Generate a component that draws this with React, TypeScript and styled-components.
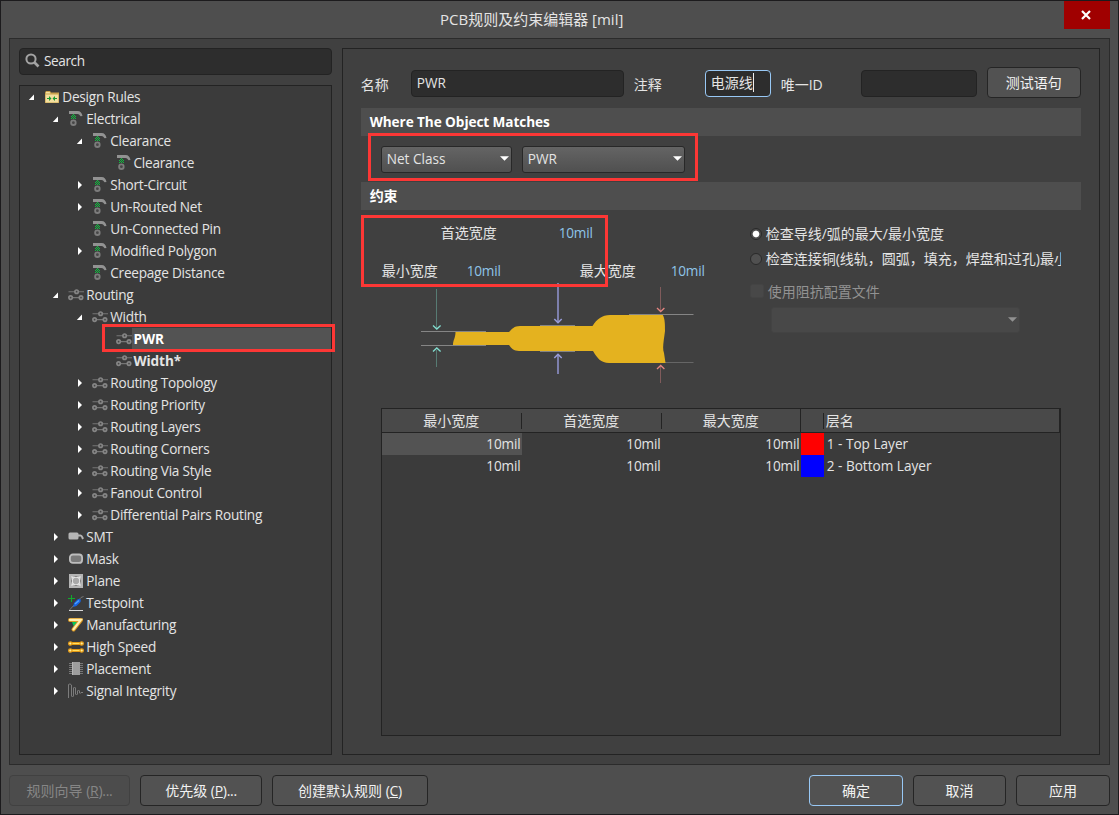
import React from 'react';
import styled, { createGlobalStyle, css } from 'styled-components';

const GlobalStyle = createGlobalStyle`
  * { box-sizing: border-box; }
  html, body { margin: 0; padding: 0; }
  body {
    background: #4d4d4d;
    color: #e4e4e4;
    font-family: "Open Sans", "Noto Sans CJK SC", sans-serif;
    font-size: 13.6px;
    overflow: hidden;
  }
`;

const Window = styled.div`
  position: relative;
  width: 1119px;
  height: 815px;
  padding: 0 8px;
  display: flex;
  flex-direction: column;
  background: #4e4e4e;
  border: 1px solid #1c1b1d;
`;

const TitleBar = styled.header`
  height: 37px;
  flex: none;
  display: flex;
  align-items: flex-start;
  justify-content: flex-end;
`;

const Title = styled.h1`
  flex: 1;
  margin: 0;
  padding-left: 431px;
  font-size: 15px;
  line-height: 37px;
  font-weight: 400;
  white-space: nowrap;
`;

const CloseButton = styled.button`
  width: 46px;
  height: 28px;
  padding: 0 2px 1px 0;
  border: 0;
  background: #a00000;
  display: flex;
  align-items: center;
  justify-content: center;
`;

const Body = styled.main`
  width: 1101px;
  height: 727px;
  flex: none;
  padding: 9px;
  display: flex;
  gap: 10px;
  background: #404040;
  border: 1px solid #2b2b2b;
`;

const Sidebar = styled.aside`
  width: 313px;
  display: flex;
  flex-direction: column;
  gap: 10px;
`;

const SearchBox = styled.div`
  height: 27px;
  padding: 0 0 2px 5px;
  display: flex;
  align-items: center;
  gap: 4px;
  letter-spacing: -0.4px;
  background: #2d2d2d;
  border: 1px solid #232323;
  border-radius: 4px;
`;

const Tree = styled.ul`
  flex: 1;
  margin: 0;
  padding: 0;
  list-style: none;
  background: #3b3b3b;
  border: 1px solid #232323;
`;

const TreeRow = styled.li<{ $level: number }>`
  position: relative;
  height: 22px;
  padding-left: ${p => p.$level * 24 + 8}px;
  display: flex;
  align-items: center;
`;

const Toggle = styled.span`
  width: 16px;
  height: 22px;
  display: flex;
  align-items: center;
`;

const IconSlot = styled.span`
  width: 16px;
  height: 16px;
  display: flex;
`;

const TreeLabel = styled.span<{ $bold?: boolean; $selected?: boolean; $leaf?: boolean }>`
  flex: 1;
  height: 22px;
  padding-left: ${p => (p.$leaf ? 1.5 : 2.3)}px;
  line-height: 22px;
  letter-spacing: ${p => (p.$bold ? -0.1 : -0.24)}px;
  white-space: nowrap;
  font-weight: ${p => (p.$bold ? 700 : 400)};
  ${p => p.$selected && css`color: #fff; background: #535353;`}
`;

const Highlight = styled.div<{ $x: number; $y: number; $w: number; $h: number }>`
  position: absolute;
  left: ${p => p.$x}px;
  top: ${p => p.$y}px;
  width: ${p => p.$w}px;
  height: ${p => p.$h}px;
  border: 3px solid #fc3735;
  pointer-events: none;
  z-index: 2;
`;

const Editor = styled.section`
  width: 759px;
  padding: 18px 0 0 18px;
  border: 1px solid #232323;
`;

const FieldRow = styled.div`
  width: 720px;
  height: 31px;
  display: flex;
  align-items: center;
`;

const FieldLabel = styled.label<{ $w: number }>`
  width: ${p => p.$w}px;
  padding-top: 5px;
  font-size: 14px;
  line-height: 20px;
  white-space: nowrap;
`;

const TextField = styled.div<{ $w: number; $focus?: boolean }>`
  width: ${p => p.$w}px;
  height: 27px;
  margin: 1px 10px 0 0;
  padding: 0 0 2px 5px;
  display: flex;
  align-items: center;
  background: #2d2d2d;
  border: 1px solid ${p => (p.$focus ? '#98c8f5' : '#232323')};
  border-radius: 4px;
  white-space: nowrap;
`;

const Cjk = styled.span`
  font-size: 14px;
`;

const Caret = styled.i`
  width: 1px;
  height: 19px;
  background: #eee;
`;

const Button = styled.button<{ $w: number; $primary?: boolean; $muted?: boolean }>`
  width: ${p => p.$w}px;
  height: 31px;
  flex: none;
  padding: 0;
  font-family: inherit;
  font-size: 14px;
  line-height: 20px;
  color: ${p => (p.$muted ? '#868686' : '#f2f2f2')};
  background: ${p => (p.$muted ? '#4c4c4c' : '#525252')};
  border: 1px solid ${p => (p.$primary ? '#98c8f5' : p.$muted ? '#414141' : '#252525')};
  border-radius: 4px;
  white-space: nowrap;
`;

const Mnemonic = styled.span`
  letter-spacing: -0.3px;
`;

const SectionBar = styled.h2<{ $top: number }>`
  width: 720px;
  height: 28px;
  margin: ${p => p.$top}px 0 0;
  padding-left: 9px;
  font-size: 13.6px;
  font-weight: 700;
  letter-spacing: -0.08px;
  line-height: 28px;
  color: #fff;
  background: #4e4e4e;
`;

const MatchRow = styled.div`
  position: relative;
  height: 46px;
  padding: 10px 0 0 20px;
  display: flex;
  gap: 10px;
`;

const Dropdown = styled.div<{ $w: number; $muted?: boolean }>`
  width: ${p => p.$w}px;
  height: ${p => (p.$muted ? 26 : 27)}px;
  padding: 0 2px 2px 5px;
  display: flex;
  align-items: center;
  justify-content: space-between;
  background: ${p => (p.$muted ? '#484848' : 'linear-gradient(#646464, #505050)')};
  border: 1px solid ${p => (p.$muted ? '#434343' : '#282828')};
  border-radius: 3px;
`;

const Constraints = styled.div`
  position: relative;
  height: 198px;
  display: flex;
`;

const WidthPane = styled.div`
  width: 389px;
`;

const WidthLine = styled.div<{ $left: number; $top: number }>`
  height: 20px;
  margin-top: ${p => p.$top}px;
  padding-left: ${p => p.$left}px;
  display: flex;
  align-items: center;
  font-size: 14px;
  line-height: 20px;
  white-space: nowrap;
`;

const WidthName = styled.span<{ $w: number }>`
  width: ${p => p.$w}px;
`;

const WidthValue = styled.span<{ $w?: number }>`
  width: ${p => p.$w ?? 40}px;
  font-size: 13.6px;
  letter-spacing: -0.2px;
  color: #8fc4e8;
`;

const OptionPane = styled.div`
  width: 311px;
  padding-top: 13px;
  overflow: hidden;
`;

const Option = styled.div<{ $h: number; $top?: number; $muted?: boolean }>`
  height: ${p => p.$h}px;
  margin-top: ${p => p.$top ?? 0}px;
  display: flex;
  align-items: center;
  gap: 4px;
  font-size: 14px;
  line-height: 22px;
  white-space: nowrap;
  color: ${p => (p.$muted ? '#929292' : '#e4e4e4')};
`;

const Radio = styled.i<{ $on?: boolean }>`
  width: 12px;
  height: 12px;
  flex: none;
  margin-bottom: 1px;
  border-radius: 50%;
  border: 1px solid #2a2a2a;
  background: ${p => (p.$on ? 'radial-gradient(circle, #fff 0 2.8px, #4d4d4d 3.8px)' : '#505050')};
`;

const Check = styled.i`
  width: 14px;
  height: 14px;
  flex: none;
  margin-bottom: 2px;
  border-radius: 2px;
  border: 1px solid #444;
  background: #484848;
`;

const DropdownIndent = styled.div`
  padding: 1px 0 0 21px;
`;

const LayerTable = styled.div`
  width: 680px;
  height: 328px;
  margin-left: 20px;
  background: #3b3b3b;
  border: 1px solid #232323;
`;

const LayerGrid = styled.div<{ $head?: boolean }>`
  height: ${p => (p.$head ? 24 : 22)}px;
  display: grid;
  grid-template-columns: 140px 140px 139px 23px 1fr;
  align-items: center;
  ${p => p.$head && css`
    background: #494949;
    border-bottom: 1px solid #232323;
    border-right: 1px solid #232323;
    font-size: 14px;
  `}
`;

const HeadCell = styled.div<{ $full?: boolean; $last?: boolean }>`
  height: ${p => (p.$full ? 23 : 16)}px;
  line-height: ${p => (p.$full ? 23 : 16)}px;
  padding-left: ${p => (p.$last ? 2 : 0)}px;
  text-align: ${p => (p.$last ? 'left' : 'center')};
  border-right: ${p => (p.$last ? 0 : 1)}px solid #232323;
`;

const Cell = styled.div<{ $active?: boolean; $name?: boolean }>`
  height: 22px;
  line-height: 22px;
  padding: ${p => (p.$name ? '0 0 0 3px' : '0 1px 0 0')};
  letter-spacing: ${p => (p.$name ? 0 : -0.1)}px;
  text-align: ${p => (p.$name ? 'left' : 'right')};
  background: ${p => (p.$active ? '#535353' : 'transparent')};
`;

const Swatch = styled.div<{ $color: string }>`
  height: 22px;
  background: ${p => p.$color};
`;

const Footer = styled.footer`
  width: 1101px;
  padding-top: 10px;
  display: flex;
  gap: 10px;
`;

const Spacer = styled.div`
  flex: 1;
`;

const DownArrow = ({ color = '#fff' }: { color?: string }) => (
  <svg width="9" height="5" viewBox="0 0 9 5"><path d="M0 .3h9L4.5 4.8z" fill={color} /></svg>
);

const Expander = ({ open }: { open: boolean }) => (
  <svg width="8" height="8" viewBox="0 0 8 8">
    <path d={open ? 'M6 1.5V7H.8z' : 'M2 0l4 4-4 4z'} fill="#fff" />
  </svg>
);

const SearchIcon = () => (
  <svg width="15" height="15" viewBox="0 0 15 15" fill="none" stroke="#a3a3a3">
    <circle cx="6" cy="6" r="4.6" strokeWidth="2" />
    <path d="M9.5 9.5l4 4" strokeWidth="2.6" />
  </svg>
);

type IconName =
  | 'folder' | 'electrical' | 'routing' | 'smt' | 'mask' | 'plane'
  | 'testpoint' | 'manufacturing' | 'speed' | 'placement' | 'signal';

const drawings: Record<IconName, React.ReactNode> = {
  folder: (
    <>
      <path d="M1 3.5L2 2h4l1 1.5h8V14H1z" fill="#c9a24c" />
      <path d="M2 4.5V3h3.6l1 1.5zM1.6 5.5h12.8v8H1.6z" fill="#f4dfa0" />
      <path d="M3 9.5h4M13 9.5H9" stroke="#1a9a32" />
      <path d="M5 7l2.5 2.5L5 12zM11 7L8.5 9.5 11 12z" fill="#1a9a32" />
    </>
  ),
  electrical: (
    <>
      <path d="M1 0h8.5c3 0 4.5 2 5 5l-2 .3C11.8 4 11 3 9.5 3H1z" fill="#929292" />
      <path d="M5 3h1v1H5zM4 4h1v1H4zM6 4h1v1H6zM3 5h1v1H3zM5 5h1v1H5zM7 5h1v1H7zM4 6h1v1H4zM6 6h1v1H6zM5 7h1v1H5zM3 7h1v1H3zM7 7h1v1H7z" fill="#10c040" />
      <circle cx="5.4" cy="11.7" r="2.3" fill="#464646" stroke="#7c7c7c" strokeWidth="1.8" />
    </>
  ),
  routing: (
    <g fill="#454545" stroke="#858585" strokeWidth="1.7">
      <path d="M.5 4.7H16M3 10.6h10" stroke="#757575" strokeWidth="1.1" />
      <circle cx="8.6" cy="4.7" r="1.7" />
      <circle cx="2.6" cy="10.6" r="1.7" />
      <circle cx="13" cy="10.6" r="1.7" />
    </g>
  ),
  smt: (
    <>
      <rect x=".5" y="3.5" width="10" height="7" rx="1.5" fill="#b5b5b5" />
      <path d="M9 6.5h3.5c1.5 0 1.5 1.5 2.5 3.5" fill="none" stroke="#b5b5b5" strokeWidth="2" />
    </>
  ),
  mask: <rect x="1.9" y="3.5" width="12.2" height="8.4" rx="3" fill="#7a7a7a" stroke="#bdbdbd" strokeWidth="1.8" />,
  plane: (
    <>
      <rect x="1" y="1" width="14" height="14" fill="#b4b4b4" />
      <path d="M3.5 3.5l9 9M12.5 3.5l-9 9" stroke="#e4e4e4" strokeWidth="1.4" />
      <circle cx="8" cy="8" r="3.8" fill="#a8a8a8" stroke="#e4e4e4" strokeWidth="1.3" />
      <path d="M3.5 6.5v3M12.5 6.5v3M6.5 3.5h3M6.5 12.5h3" stroke="#858585" />
    </>
  ),
  testpoint: (
    <>
      <path d="M1.5 15L13 2.5l2.5-1" fill="none" stroke="#777" />
      <path d="M5 12l1-4 4-4 3 .5-.5 2.5-4 4z" fill="#1763e0" />
      <path d="M7 9l4-3.6" stroke="#4fa3ff" strokeWidth="1.3" />
      <path d="M3.5 0v7M0 3.5h7" stroke="#11aa2c" />
      <path d="M1 15.5h14" stroke="#d8d8d8" />
    </>
  ),
  manufacturing: (
    <>
      <path d="M4 5h6l-4 5z" fill="#08c85a" />
      <path d="M2 3h11L5.5 12.5" fill="none" stroke="#dc9a24" strokeWidth="4" strokeLinejoin="round" strokeLinecap="round" />
      <path d="M2 2.9h10.8L5.5 12.3" fill="none" stroke="#ffeeb0" strokeWidth="2.2" strokeLinecap="round" />
    </>
  ),
  speed: (
    <g fill="#fff0a0" stroke="#e59a14" strokeWidth="1.2">
      <path d="M3 4.5h10M3 11.5h10" strokeWidth="3" />
      <path d="M3 4.5h10M3 11.5h10" stroke="#ffdf60" strokeWidth="1.2" />
      <circle cx="2.3" cy="4.5" r="1.7" /><circle cx="13.7" cy="4.5" r="1.7" />
      <circle cx="2.3" cy="11.5" r="1.7" /><circle cx="13.7" cy="11.5" r="1.7" />
    </g>
  ),
  placement: (
    <>
      <path d="M1 2.5h14M1 4.5h14M1 6.5h14M1 8.5h14M1 10.5h14M1 12.5h14" stroke="#777" />
      <rect x="4" y="1" width="8" height="13" fill="#9d9d9d" />
      <path d="M4.5 1v13" stroke="#b5b5b5" />
    </>
  ),
  signal: (
    <path
      d="M.5 15V1.5Q2 0 3.5 2v11Q4.5 15 5.5 13V5Q6.5 3 7.5 5v6q1 2 2 0V8q1-2 2 0v2q1 1 1.5-.5H15"
      fill="none" stroke="#7c7c7c"
    />
  ),
};

const RuleIcon = ({ name }: { name: IconName }) => (
  <svg width="16" height="16" viewBox="0 0 16 16">{drawings[name]}</svg>
);

interface Rule {
  level: number;
  label: string;
  icon: IconName;
  state?: 'open' | 'closed';
  bold?: boolean;
  selected?: boolean;
}

const rules: Rule[] = [
  { level: 0, label: 'Design Rules', icon: 'folder', state: 'open' },
  { level: 1, label: 'Electrical', icon: 'electrical', state: 'open' },
  { level: 2, label: 'Clearance', icon: 'electrical', state: 'open' },
  { level: 3, label: 'Clearance', icon: 'electrical' },
  { level: 2, label: 'Short-Circuit', icon: 'electrical', state: 'closed' },
  { level: 2, label: 'Un-Routed Net', icon: 'electrical', state: 'closed' },
  { level: 2, label: 'Un-Connected Pin', icon: 'electrical' },
  { level: 2, label: 'Modified Polygon', icon: 'electrical', state: 'closed' },
  { level: 2, label: 'Creepage Distance', icon: 'electrical' },
  { level: 1, label: 'Routing', icon: 'routing', state: 'open' },
  { level: 2, label: 'Width', icon: 'routing', state: 'open' },
  { level: 3, label: 'PWR', icon: 'routing', bold: true, selected: true },
  { level: 3, label: 'Width*', icon: 'routing', bold: true },
  { level: 2, label: 'Routing Topology', icon: 'routing', state: 'closed' },
  { level: 2, label: 'Routing Priority', icon: 'routing', state: 'closed' },
  { level: 2, label: 'Routing Layers', icon: 'routing', state: 'closed' },
  { level: 2, label: 'Routing Corners', icon: 'routing', state: 'closed' },
  { level: 2, label: 'Routing Via Style', icon: 'routing', state: 'closed' },
  { level: 2, label: 'Fanout Control', icon: 'routing', state: 'closed' },
  { level: 2, label: 'Differential Pairs Routing', icon: 'routing', state: 'closed' },
  { level: 1, label: 'SMT', icon: 'smt', state: 'closed' },
  { level: 1, label: 'Mask', icon: 'mask', state: 'closed' },
  { level: 1, label: 'Plane', icon: 'plane', state: 'closed' },
  { level: 1, label: 'Testpoint', icon: 'testpoint', state: 'closed' },
  { level: 1, label: 'Manufacturing', icon: 'manufacturing', state: 'closed' },
  { level: 1, label: 'High Speed', icon: 'speed', state: 'closed' },
  { level: 1, label: 'Placement', icon: 'placement', state: 'closed' },
  { level: 1, label: 'Signal Integrity', icon: 'signal', state: 'closed' },
];

const layers = [
  { name: '1 - Top Layer', color: '#ff0000', active: true },
  { name: '2 - Bottom Layer', color: '#0000ff', active: false },
];

const DiagramSvg = styled.svg`
  display: block;
  margin: 1px 0 0 59px;
`;

const TrackDiagram = () => (
  <DiagramSvg width="280" height="105" viewBox="420 282 280 105" fill="none">
    <path d="M421 331.5h65M421 345.5h65M540 325.5h35M540 351.5h35M629 314.5h64.5" stroke="#858585" />
    <path d="M665 362.5h28.5" stroke="#666" />
    <path
      d="M455.5 332H509C512 329 514 326 520 326H592.5C597 319 602 315 610 315H662.8C665 319 665 324 665 331C664 340 662 348 664 353L665.5 363H609C601 363 597 358 593 351H519C514 351 511 348 509 345H453C453 340 455.5 338 455.5 332Z"
      fill="#e4b21f"
    />
    <path d="M436.5 289v39M436.5 350v17" stroke="#577b73" />
    <path d="M433 325.5l3.8 3.5 3.8-3.5M433 351.5l3.8-3.5 3.8 3.5" stroke="#82ded0" strokeWidth="1.3" />
    <path d="M558 283v39M558 355v19" stroke="#8487b9" strokeWidth="1.8" />
    <path d="M554.3 319l3.7 3.7 3.7-3.7M554.3 358l3.7-3.7 3.7 3.7" stroke="#999dda" strokeWidth="1.5" />
    <path d="M660.5 287v24M660.5 366v17" stroke="#805b5b" />
    <path d="M657 308l3.7 3.5 3.7-3.5M657 369l3.7-3.5 3.7 3.5" stroke="#e58580" strokeWidth="1.3" />
  </DiagramSvg>
);

export default function App() {
  return (
    <>
      <GlobalStyle />
      <Window>
        <TitleBar>
          <Title>PCB规则及约束编辑器 [mil]</Title>
          <CloseButton aria-label="Close">
            <svg width="10" height="10" viewBox="0 0 10 10"><path d="M1 1l8 8M9 1L1 9" stroke="#fff" strokeWidth="2.2" /></svg>
          </CloseButton>
        </TitleBar>
        <Body>
          <Sidebar>
            <SearchBox><SearchIcon />Search</SearchBox>
            <Tree>
              {rules.map((rule, i) => (
                <TreeRow key={i} $level={rule.level}>
                  <Toggle>{rule.state && <Expander open={rule.state === 'open'} />}</Toggle>
                  <IconSlot><RuleIcon name={rule.icon} /></IconSlot>
                  <TreeLabel $bold={rule.bold} $selected={rule.selected} $leaf={rule.level === 3}>{rule.label}</TreeLabel>
                  {rule.selected && <Highlight $x={82} $y={-4} $w={233} $h={28} />}
                </TreeRow>
              ))}
            </Tree>
          </Sidebar>
          <Editor>
            <FieldRow>
              <FieldLabel $w={50}>名称</FieldLabel>
              <TextField $w={213}>PWR</TextField>
              <FieldLabel $w={71}>注释</FieldLabel>
              <TextField $w={66} $focus><Cjk>电源线</Cjk><Caret /></TextField>
              <FieldLabel $w={80}>唯一ID</FieldLabel>
              <TextField $w={116} />
              <Button $w={94}>测试语句</Button>
            </FieldRow>
            <SectionBar $top={10}>Where The Object Matches</SectionBar>
            <MatchRow>
              <Dropdown $w={131}>Net Class<DownArrow /></Dropdown>
              <Dropdown $w={163}>PWR<DownArrow /></Dropdown>
              <Highlight $x={7} $y={-3} $w={330} $h={48} />
            </MatchRow>
            <SectionBar $top={0}><Cjk>约束</Cjk></SectionBar>
            <Constraints>
              <WidthPane>
                <WidthLine $left={80} $top={13}>
                  <WidthName $w={118}>首选宽度</WidthName>
                  <WidthValue>10mil</WidthValue>
                </WidthLine>
                <WidthLine $left={21} $top={18}>
                  <WidthName $w={85}>最小宽度</WidthName>
                  <WidthValue $w={113}>10mil</WidthValue>
                  <WidthName $w={91}>最大宽度</WidthName>
                  <WidthValue>10mil</WidthValue>
                </WidthLine>
                <TrackDiagram />
              </WidthPane>
              <OptionPane>
                <Option $h={22}><Radio $on />检查导线/弧的最大/最小宽度</Option>
                <Option $h={28}><Radio />检查连接铜(线轨，圆弧，填充，焊盘和过孔)最小</Option>
                <Option $h={28} $top={5} $muted><Check />使用阻抗配置文件</Option>
                <DropdownIndent><Dropdown $w={249} $muted><span /><DownArrow color="#929292" /></Dropdown></DropdownIndent>
              </OptionPane>
              <Highlight $x={0} $y={5} $w={247} $h={72} />
            </Constraints>
            <LayerTable>
              <LayerGrid $head>
                <HeadCell>最小宽度</HeadCell>
                <HeadCell>首选宽度</HeadCell>
                <HeadCell $full>最大宽度</HeadCell>
                <HeadCell />
                <HeadCell $last>层名</HeadCell>
              </LayerGrid>
              {layers.map(layer => (
                <LayerGrid key={layer.name}>
                  <Cell $active={layer.active}>10mil</Cell>
                  <Cell>10mil</Cell>
                  <Cell>10mil</Cell>
                  <Swatch $color={layer.color} />
                  <Cell $name>{layer.name}</Cell>
                </LayerGrid>
              ))}
            </LayerTable>
          </Editor>
        </Body>
        <Footer>
          <Button $w={121} $muted>规则向导 <Mnemonic>(<u>R</u>)...</Mnemonic></Button>
          <Button $w={122}>优先级 <Mnemonic>(<u>P</u>)...</Mnemonic></Button>
          <Button $w={156}>创建默认规则 <Mnemonic>(<u>C</u>)</Mnemonic></Button>
          <Spacer />
          <Button $w={94} $primary>确定</Button>
          <Button $w={93}>取消</Button>
          <Button $w={94}>应用</Button>
        </Footer>
      </Window>
    </>
  );
}
